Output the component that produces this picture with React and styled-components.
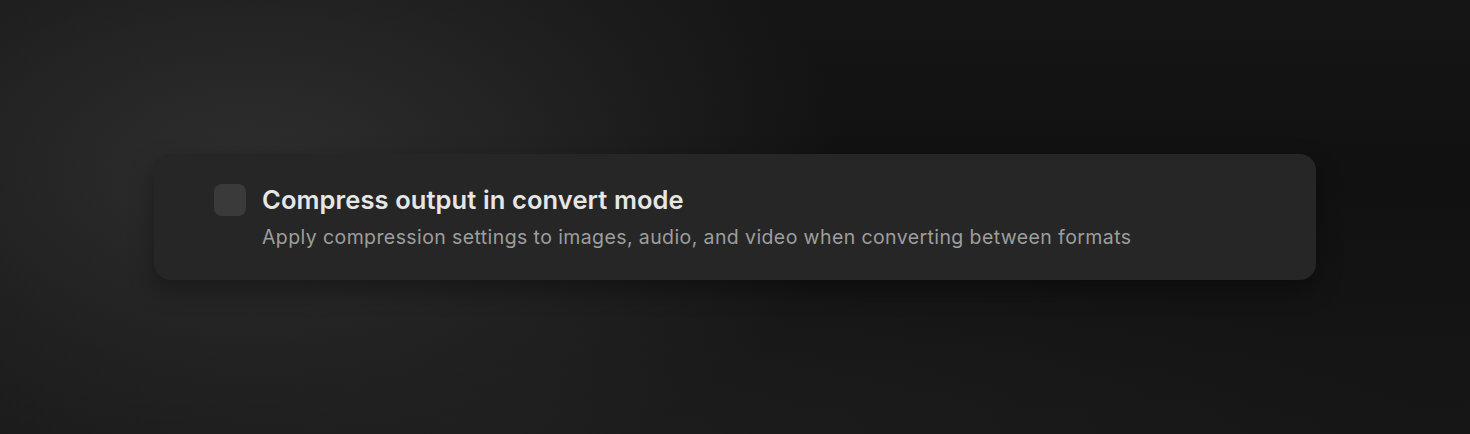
import styled, { createGlobalStyle } from "styled-components";

const GlobalStyle = createGlobalStyle`
  html, body {
    margin: 0;
    padding: 0;
    height: 100%;
  }

  body {
    font-family: Inter, "Noto Sans", "Liberation Sans", sans-serif;
    -webkit-font-smoothing: antialiased;
    background: #121212;
  }
`;

const Page = styled.div`
  width: 1470px;
  height: 434px;
  box-sizing: border-box;
  padding: 154px 154px 0 154px;
  background:
    radial-gradient(ellipse 600px 340px at 250px 170px, rgba(46, 46, 46, 1) 0%, rgba(38, 38, 38, 0.85) 45%, rgba(30, 30, 30, 0) 100%),
    radial-gradient(ellipse 900px 200px at 520px 434px, rgba(30, 30, 30, 0.9), rgba(26, 26, 26, 0) 100%),
    linear-gradient(180deg, #151515 0%, #111111 40%, #161616 100%);
  overflow: hidden;
`;

const Card = styled.label`
  display: flex;
  flex-direction: row;
  align-items: flex-start;
  gap: 16px;
  width: 1162px;
  height: 126px;
  box-sizing: border-box;
  padding: 30px 60px;
  background: #262626;
  border-radius: 16px;
  box-shadow: 0 10px 24px rgba(0, 0, 0, 0.35);
  cursor: pointer;
`;

const Box = styled.span`
  flex: none;
  width: 32px;
  height: 32px;
  border-radius: 8px;
  background: ${({ checked }) => (checked ? "#277dff" : "#3a3a3a")};
`;

const Texts = styled.div`
  display: flex;
  flex-direction: column;
  gap: 9px;
`;

const Title = styled.div`
  font-size: 25.5px;
  line-height: 32px;
  font-weight: 600;
  color: #e6e6e6;
  letter-spacing: 0.1px;
`;

const Description = styled.div`
  font-size: 19.5px;
  line-height: 24px;
  font-weight: 400;
  color: #9e9e9e;
  letter-spacing: 0.4px;
`;

export default function App() {
  return (
    <>
      <GlobalStyle />
      <Page>
        <Card>
          <Box checked={false} />
          <Texts>
            <Title>Compress output in convert mode</Title>
            <Description>
              Apply compression settings to images, audio, and video when converting between formats
            </Description>
          </Texts>
        </Card>
      </Page>
    </>
  );
}
